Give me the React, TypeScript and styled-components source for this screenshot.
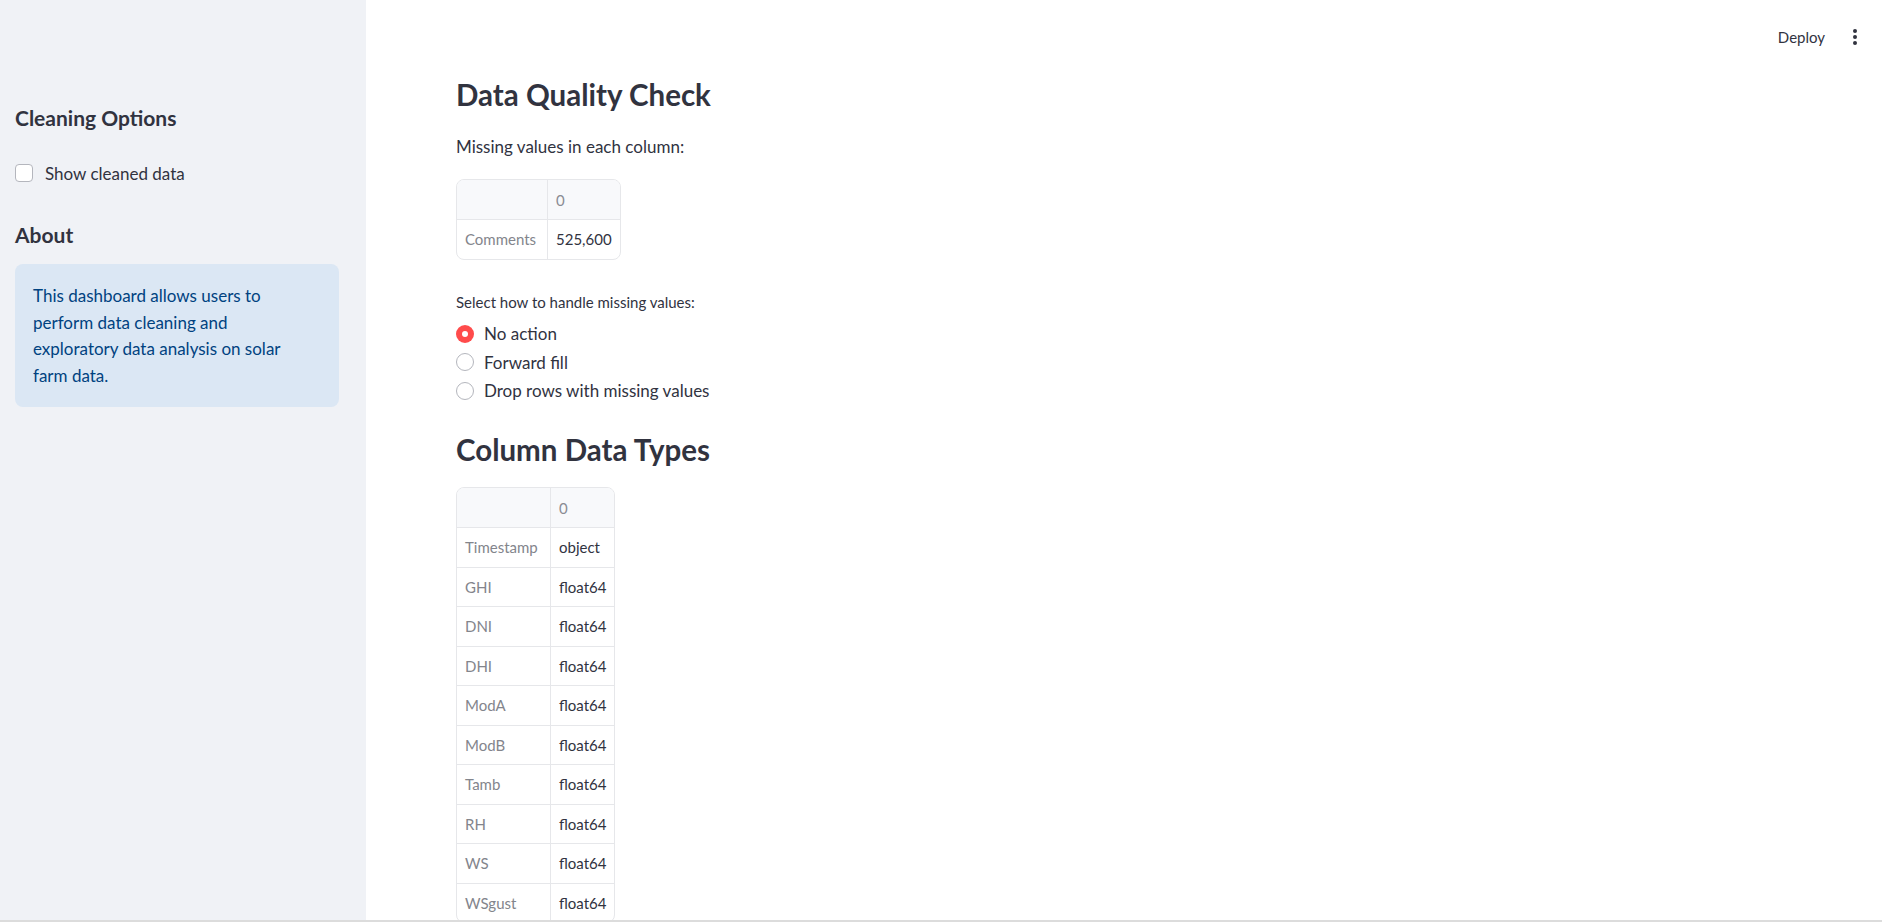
import React, { useState } from "react";
import styled, { createGlobalStyle } from "styled-components";

const GlobalStyle = createGlobalStyle`
    html, body {
        margin: 0;
        padding: 0;
        background: #ffffff;
        font-family: Lato, "Open Sans", sans-serif;
        color: #31333f;
    }
`;

const Page = styled.div`
    display: flex;
    flex-direction: column;
    height: 100vh;
    overflow: hidden;
`;

const Body = styled.div`
    display: flex;
    flex: 1;
    min-height: 0;
`;

const BottomEdge = styled.div`
    height: 2px;
    background: #dcdcdc;
    flex-shrink: 0;
`;

const Sidebar = styled.aside`
    width: 366px;
    flex-shrink: 0;
    background: #f0f2f6;
    padding: 103px 27px 0 15px;
    box-sizing: border-box;
    display: flex;
    flex-direction: column;
    & > * {
        flex-shrink: 0;
    }
`;

const SideHeading = styled.h3<{ $top?: number }>`
    margin: ${(p) => p.$top || 0}px 0 0;
    font-size: 21px;
    font-weight: 700;
    line-height: 30px;
    color: #31333f;
`;

const CheckRow = styled.label`
    display: flex;
    align-items: center;
    gap: 12px;
    height: 24px;
    margin-top: 28px;
    font-size: 17px;
    cursor: pointer;
`;

const CheckBox = styled.span`
    width: 16px;
    height: 16px;
    border: 1px solid #b4b6bd;
    border-radius: 4px;
    background: #ffffff;
`;

const InfoBox = styled.div`
    margin-top: 14px;
    background: #dbe7f4;
    color: #004280;
    border-radius: 8px;
    padding: 19px 40px 17px 18px;
    font-size: 17px;
    line-height: 26.7px;
`;

const Main = styled.main`
    flex: 1;
    display: flex;
    flex-direction: column;
    padding: 0 90px;
    min-width: 0;
    & > * {
        flex-shrink: 0;
    }
`;

const Toolbar = styled.header`
    height: 60px;
    display: flex;
    justify-content: flex-end;
    align-items: center;
    gap: 20px;
    margin-right: -73px;
    padding-top: 13px;
    box-sizing: border-box;
`;

const DeployButton = styled.button`
    border: none;
    background: none;
    font-family: inherit;
    font-size: 15px;
    color: #31333f;
    padding: 0;
    cursor: pointer;
`;

const MenuButton = styled.button`
    border: none;
    background: none;
    padding: 0;
    width: 20px;
    display: flex;
    justify-content: center;
    cursor: pointer;
`;

const Heading = styled.h2<{ $top: number }>`
    margin: ${(p) => p.$top}px 0 0;
    font-size: 29.5px;
    font-weight: 700;
    line-height: 40px;
    color: #31333f;
`;

const Text = styled.p`
    margin: 19px 0 0;
    font-size: 17px;
    line-height: 26px;
`;

const Table = styled.table<{ $top: number }>`
    margin-top: ${(p) => p.$top}px;
    border-collapse: separate;
    border-spacing: 0;
    border: 1px solid #e6e7ea;
    border-radius: 8px;
    overflow: hidden;
    align-self: flex-start;
    font-size: 15px;
`;

const HeadCell = styled.th<{ $w: number }>`
    width: ${(p) => p.$w}px;
    height: 40px;
    padding: 0 8px;
    box-sizing: border-box;
    background: #f8f9fb;
    color: #8a8c93;
    font-weight: 400;
    text-align: left;
    border-right: 1px solid #e6e7ea;
    border-bottom: 1px solid #e6e7ea;
    &:last-child {
        border-right: none;
    }
`;

const IndexCell = styled.td`
    height: 38.5px;
    padding: 0 8px;
    color: #83858c;
    white-space: nowrap;
    border-right: 1px solid #e6e7ea;
    border-bottom: 1px solid #e6e7ea;
    tr:last-child > & {
        border-bottom: none;
    }
`;

const ValueCell = styled.td`
    height: 38.5px;
    padding: 0 8px;
    color: #31333f;
    white-space: nowrap;
    border-bottom: 1px solid #e6e7ea;
    tr:last-child > & {
        border-bottom: none;
    }
`;

const RadioLabel = styled.div`
    margin-top: 31px;
    font-size: 15px;
    line-height: 22px;
`;

const RadioGroup = styled.div`
    margin-top: 7px;
    display: flex;
    flex-direction: column;
`;

const RadioRow = styled.label`
    display: flex;
    align-items: center;
    gap: 10px;
    height: 28.5px;
    font-size: 17px;
    cursor: pointer;
`;

const RadioDot = styled.span<{ $on: boolean }>`
    width: 18px;
    height: 18px;
    border-radius: 50%;
    box-sizing: border-box;
    border: ${(p) => (p.$on ? "none" : "1px solid #b4b6bd")};
    background: ${(p) => (p.$on ? "#ff4b4b" : "#ffffff")};
    display: flex;
    align-items: center;
    justify-content: center;
    &::after {
        content: "";
        width: 6px;
        height: 6px;
        border-radius: 50%;
        background: #ffffff;
        display: ${(p) => (p.$on ? "block" : "none")};
    }
`;

const dtypes = [
    ["Timestamp", "object"],
    ["GHI", "float64"],
    ["DNI", "float64"],
    ["DHI", "float64"],
    ["ModA", "float64"],
    ["ModB", "float64"],
    ["Tamb", "float64"],
    ["RH", "float64"],
    ["WS", "float64"],
    ["WSgust", "float64"],
];

const options = ["No action", "Forward fill", "Drop rows with missing values"];

export default function App() {
    const [choice, setChoice] = useState<string>("No action");

    return (
        <Page>
            <GlobalStyle />
            <Body>
                <Sidebar>
                    <SideHeading>Cleaning Options</SideHeading>
                    <CheckRow>
                        <CheckBox />
                        Show cleaned data
                    </CheckRow>
                    <SideHeading $top={35}>About</SideHeading>
                    <InfoBox>
                        This dashboard allows users to perform data cleaning and exploratory data analysis on solar
                        farm data.
                    </InfoBox>
                </Sidebar>
                <Main>
                    <Toolbar>
                        <DeployButton>Deploy</DeployButton>
                        <MenuButton>
                            <svg width="4" height="16" viewBox="0 0 4 16">
                                <circle cx="2" cy="2" r="2" fill="#31333f" />
                                <circle cx="2" cy="8" r="2" fill="#31333f" />
                                <circle cx="2" cy="14" r="2" fill="#31333f" />
                            </svg>
                        </MenuButton>
                    </Toolbar>
                    <Heading $top={15}>Data Quality Check</Heading>
                    <Text>Missing values in each column:</Text>
                    <Table $top={19}>
                        <thead>
                            <tr>
                                <HeadCell $w={91} />
                                <HeadCell $w={70}>0</HeadCell>
                            </tr>
                        </thead>
                        <tbody>
                            <tr>
                                <IndexCell>Comments</IndexCell>
                                <ValueCell>525,600</ValueCell>
                            </tr>
                        </tbody>
                    </Table>
                    <RadioLabel>Select how to handle missing values:</RadioLabel>
                    <RadioGroup>
                        {options.map((o) => (
                            <RadioRow key={o} onClick={() => setChoice(o)}>
                                <RadioDot $on={choice === o} />
                                {o}
                            </RadioRow>
                        ))}
                    </RadioGroup>
                    <Heading $top={25}>Column Data Types</Heading>
                    <Table $top={17}>
                        <thead>
                            <tr>
                                <HeadCell $w={94} />
                                <HeadCell $w={63}>0</HeadCell>
                            </tr>
                        </thead>
                        <tbody>
                            {dtypes.map(([name, type]) => (
                                <tr key={name}>
                                    <IndexCell>{name}</IndexCell>
                                    <ValueCell>{type}</ValueCell>
                                </tr>
                            ))}
                        </tbody>
                    </Table>
                </Main>
            </Body>
            <BottomEdge />
        </Page>
    );
}
